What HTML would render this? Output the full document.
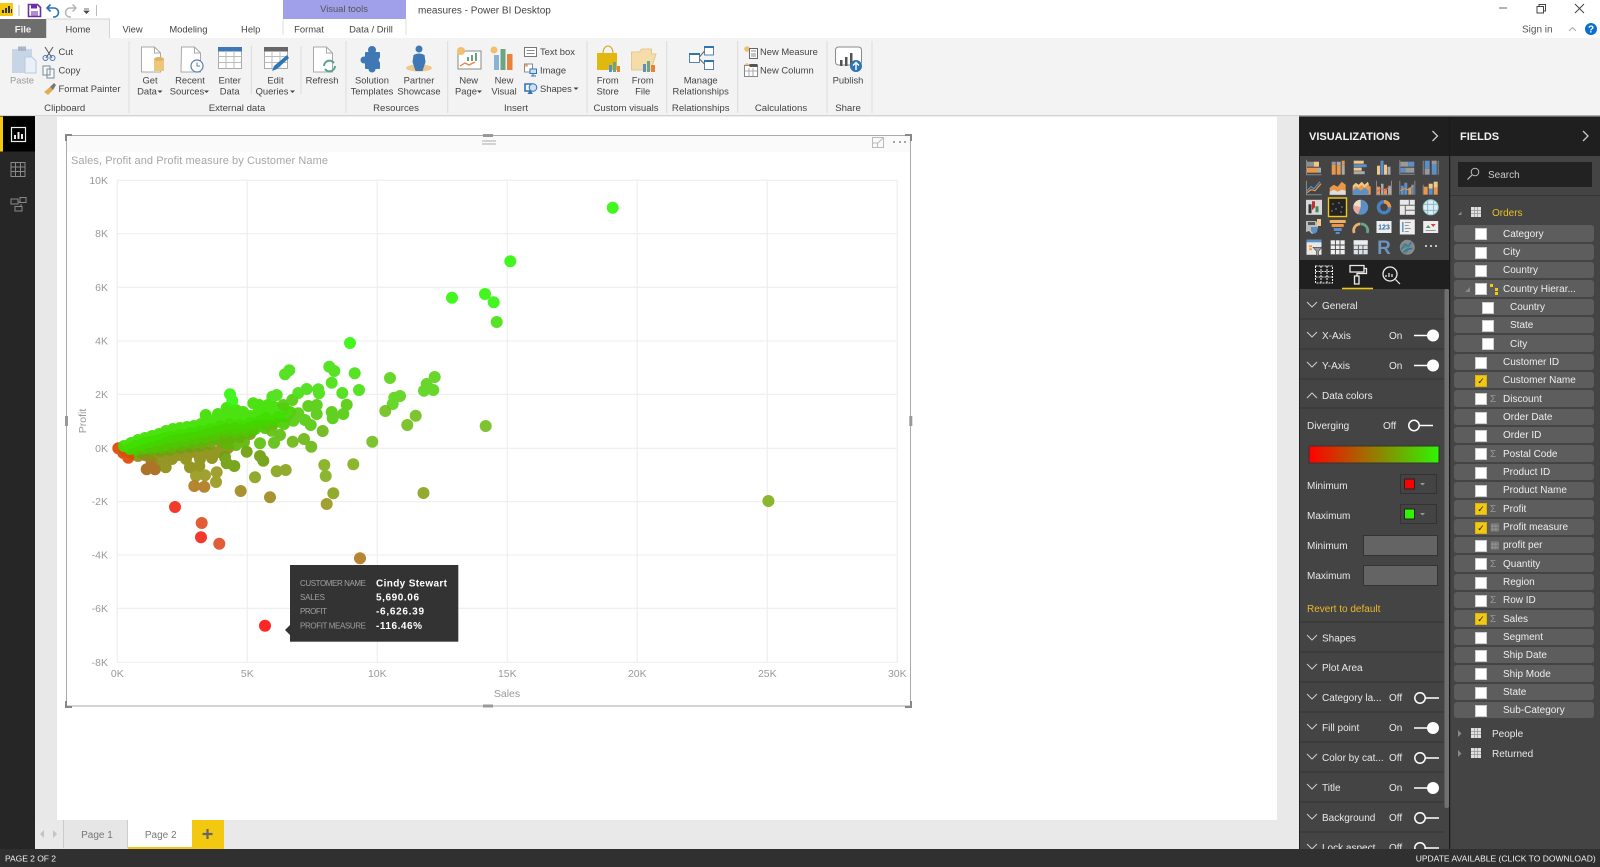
<!DOCTYPE html>
<html lang="en"><head><meta charset="utf-8"><title>measures - Power BI Desktop</title>
<style>
html,body{margin:0;padding:0;width:1600px;height:867px;overflow:hidden;background:#fff}
svg{position:absolute;left:0;top:0;font-family:"Liberation Sans",sans-serif;filter:blur(.35px)}
text{font-size:9.4px;fill:#444}
.c{text-anchor:middle}
.g{fill:#666}
.w{fill:#e8e8e8;font-size:10px}
.a{fill:#999;font-size:10.5px}
.dot{fill:none;stroke-linecap:round;stroke-width:12;opacity:.93}
.sep{stroke:#dcdcdc;stroke-width:1}
.ln{stroke:#333;stroke-width:1}
.ch{fill:none;stroke:#c8c8c8;stroke-width:1.1}
.tg{stroke:#fff;stroke-width:1.5;fill:none}
#f{position:absolute;left:1454px;top:225.3px;width:140px;font:10px "Liberation Sans",sans-serif;color:#eee;filter:blur(.35px)}
#f div{position:relative;height:16.4px;margin-bottom:1.95px;background:#5d5d5d;border-radius:3px;line-height:16px;box-sizing:border-box}
#f i{position:absolute;left:22px;top:4px;width:10px;height:10px;background:#fff;box-shadow:0 0 0 1px #ccc;font:bold 9px/10px "Liberation Sans","DejaVu Sans",sans-serif;color:#222;text-align:center}
#f i.y{background:#f2c811;box-shadow:0 0 0 1px #d8b20d}
#f span{position:absolute;left:49px;top:1.5px;white-space:nowrap}
#f b{position:absolute;left:36px;top:1.5px;font-weight:normal;color:#999;font-size:10px}
#f .s i{left:29px}#f .s span{left:56px}
</style></head><body>
<svg width="1600" height="867" viewBox="0 0 1600 867" xmlns="http://www.w3.org/2000/svg">
<!-- base areas -->
<rect width="1600" height="867" fill="#fff"/>
<rect x="0" y="38" width="1600" height="77" fill="#f3f3f3"/>
<rect x="0" y="115" width="1600" height="1.4" fill="#d4d4d4"/>
<rect x="0" y="116" width="35" height="733" fill="#262626"/>
<rect x="35" y="116" width="22" height="704" fill="#e8e8e8"/>
<rect x="1277" y="116" width="22" height="704" fill="#e9e9e9"/>
<rect x="35" y="820" width="1264" height="29" fill="#e9e9e9"/>
<!-- title bar -->
<rect x="0" y="3" width="13" height="13" fill="#f2c811"/>
<path d="M2 13v-3h2v3zM5 13V8h2v5zM8 13V6h2v7zM11 13V9h1v4z" fill="#333"/>
<path d="M19 5v11M96.500 5v11" stroke="#bbb"/>
<path d="M28.500 4.500h9l3 3v9h-12z" fill="none" stroke="#6f2da8" stroke-width="1.6"/><rect x="31" y="5" width="6" height="3.500" fill="#6f2da8"/><rect x="31" y="11" width="7" height="5" fill="#6f2da8" opacity=".55"/>
<path d="M47 8h7a4.500 4.500 0 0 1 0 9h-1M50.500 4.500 47 8l3.500 3.500" fill="none" stroke="#2a6ebb" stroke-width="1.6"/>
<path d="M76 8h-6a4.500 4.500 0 0 0 0 9h1M72.500 4.500 76 8l-3.500 3.500" fill="none" stroke="#b5b5b5" stroke-width="1.5"/>
<path d="M84 9h5M84 11l2.500 2.500 2.500-2.500z" fill="#444" stroke="#444" stroke-width=".7"/>
<rect x="283" y="0" width="123" height="19" fill="#a0a0ea"/>
<path d="M283 19v16M406 19v16" stroke="#ddd"/>
<text x="344" y="12" class="c" style="font-size:9.400px;fill:#555">Visual tools</text>
<text x="418" y="13.500" style="font-size:10px;fill:#444">measures - Power BI Desktop</text>
<path d="M1499 8h8" stroke="#666" stroke-width="1"/>
<path d="M1537 6.500h6.500v6.500h-6.500zM1539 6.500v-2h6.500v6.500h-2" fill="none" stroke="#444"/>
<path d="M1575 4l9 9M1584 4l-9 9" stroke="#444" stroke-width="1"/>
<text x="1522" y="32.500" style="font-size:10px;fill:#555">Sign in</text>
<path d="M1569 31l3.500-3.500 3.500 3.500" fill="none" stroke="#aaa"/>
<circle cx="1591" cy="29" r="6" fill="#0a6ed1"/><text x="1591" y="32.500" class="c" style="font-size:10px;font-weight:bold;fill:#fff">?</text>
<!-- tabs -->
<rect x="0" y="19" width="46.500" height="19" fill="#6d6d6d"/><text x="23" y="32.500" class="c" style="font-size:9.600px;font-weight:bold;fill:#f0f0f0">File</text>
<path d="M46.500 38V19h63v19" fill="#f3f3f3" stroke="#d4d4d4"/><rect x="47" y="36" width="62" height="3" fill="#f3f3f3"/>
<text x="78" y="32.500" class="c">Home</text><text x="132.600" y="32.500" class="c">View</text><text x="188.400" y="32.500" class="c">Modeling</text><text x="250.700" y="32.500" class="c">Help</text><text x="309" y="32.500" class="c">Format</text><text x="371" y="32.500" class="c">Data / Drill</text>
<!-- ribbon separators -->
<g class="sep"><path d="M129 41v72M346 41v72M447.700 41v72M587 41v72M666.700 41v72M737.700 41v72M827 41v72M872 41v72M251.400 46v48M301 46v48"/></g>
<!-- clipboard -->
<rect x="12" y="49" width="20" height="24" fill="#c8d5e6"/><rect x="18" y="46.500" width="8" height="4.500" fill="#a9b6c6"/><path d="M25 57h7l4 4v12H25z" fill="#eaf0f8" stroke="#b9c9dd"/>
<text x="22" y="83.500" class="c" style="fill:#999">Paste</text>
<path d="M45 47l7 11M53 47l-7 11" stroke="#555" stroke-width="1"/><circle cx="45.500" cy="58" r="2.500" fill="none" stroke="#3f78b4"/><circle cx="52.500" cy="58" r="2.500" fill="none" stroke="#3f78b4"/>
<text x="58.500" y="55">Cut</text>
<path d="M43 66h7v9h-7zM47 69h7v9h-7z" fill="#f8f8f8" stroke="#7a8a9c"/><text x="58.500" y="73.500">Copy</text>
<path d="M44 92l6-5 3 3-5 5z" fill="#e0b050"/><path d="M50 87l4-4 2 2-3 5z" fill="#777"/><text x="58.500" y="92">Format Painter</text>
<text x="64.700" y="111" class="c" style="font-size:9.600px">Clipboard</text>
<!-- external data -->
<path d="M141.500 47h13l6 6v19h-19z" fill="#fff" stroke="#a8a8a8"/><path d="M154.500 47v6h6" fill="none" stroke="#a8a8a8"/><rect x="154" y="59" width="10" height="12" fill="#ecc779"/><ellipse cx="159" cy="59" rx="5" ry="2" fill="#dfb45e"/>
<text x="150" y="83.500" class="c">Get</text><text x="147" y="94.500" class="c">Data</text><path d="M157.500 90.500h5l-2.500 2.500z" fill="#444"/>
<path d="M181.500 47h13l6 6v19h-19.500z" fill="#fff" stroke="#a8a8a8"/><path d="M194.500 47v6h6" fill="none" stroke="#a8a8a8"/><circle cx="197" cy="66" r="6" fill="#fff" stroke="#5a80aa" stroke-width="1.200"/><path d="M197 62.500v3.500h3" fill="none" stroke="#5a80aa"/>
<text x="190" y="83.500" class="c">Recent</text><text x="187" y="94.500" class="c">Sources</text><path d="M204 90.500h5l-2.500 2.500z" fill="#444"/>
<rect x="218.500" y="47.500" width="23" height="21" fill="#fff" stroke="#aaa"/><rect x="218" y="47" width="24" height="4.500" fill="#3f78b4"/><path d="M218.500 56.500h23M218.500 62.500h23M226 51v18M234 51v18" stroke="#bbb"/>
<text x="229.700" y="83.500" class="c">Enter</text><text x="229.700" y="94.500" class="c">Data</text>
<rect x="264.500" y="47.500" width="23" height="21" fill="#fff" stroke="#aaa"/><rect x="264" y="47" width="24" height="4.500" fill="#666"/><path d="M264.500 56.500h23M264.500 62.500h23M272 51v18M280 51v18" stroke="#bbb"/><path d="M272 71l2-5 13-11 2 3-12 11z" fill="#2e75b6"/>
<text x="275.500" y="83.500" class="c">Edit</text><text x="272" y="94.500" class="c">Queries</text><path d="M290 90.500h5l-2.500 2.500z" fill="#444"/>
<path d="M313.500 47h13l6 6v19h-19z" fill="#fff" stroke="#a8a8a8"/><path d="M326.500 47v6h6" fill="none" stroke="#a8a8a8"/><path d="M324 66a5.500 5.500 0 0 1 10-3M335 66a5.500 5.500 0 0 1-10 3" fill="none" stroke="#57a486" stroke-width="2"/>
<text x="322" y="83.500" class="c">Refresh</text>
<text x="237" y="111" class="c" style="font-size:9.600px">External data</text>
<!-- resources -->
<rect x="365" y="52" width="15" height="17" rx="1" fill="#3f78b4"/><circle cx="372" cy="50" r="4" fill="#3f78b4"/><circle cx="372" cy="69" r="3.500" fill="#3f78b4"/><circle cx="364" cy="60" r="3.500" fill="#3f78b4"/><circle cx="382" cy="60" r="3.200" fill="#f3f3f3"/>
<text x="372" y="83.500" class="c">Solution</text><text x="372" y="94.500" class="c">Templates</text>
<ellipse cx="419" cy="68" rx="13" ry="3.500" fill="#efc98d"/><circle cx="419" cy="49" r="3.500" fill="#3f78b4"/><path d="M413.500 55q5.500-3 11 0l1 7-3 9h-7l-3-9z" fill="#3f78b4"/>
<text x="419" y="83.500" class="c">Partner</text><text x="419" y="94.500" class="c">Showcase</text>
<text x="396" y="111" class="c" style="font-size:9.600px">Resources</text>
<!-- insert -->
<rect x="458" y="51" width="23" height="18" fill="#fff" stroke="#888"/><circle cx="461" cy="51" r="4" fill="#f0c070"/><path d="M467 57h2v4h-2zM471 55h2v6h-2zM475 53h2v8h-2z" fill="#6aa082"/><path d="M460 66l5-3 4 2 6-3" fill="none" stroke="#e8813a" stroke-width="1.300"/>
<text x="468.700" y="83.500" class="c">New</text><text x="466" y="94.500" class="c">Page</text><path d="M477 90.500h5l-2.500 2.500z" fill="#444"/>
<circle cx="494" cy="50" r="3.500" fill="#f0c070"/><rect x="494" y="55" width="5" height="15" fill="#8ab2d2"/><rect x="500.500" y="49" width="5" height="21" fill="#6ba588"/><rect x="507" y="54" width="5.500" height="16" fill="#e8813a"/>
<text x="504" y="83.500" class="c">New</text><text x="504" y="94.500" class="c">Visual</text>
<rect x="524.500" y="47.500" width="12" height="9" fill="#fff" stroke="#777"/><path d="M526.500 50.500h8M526.500 53.500h8" stroke="#888"/><text x="540" y="55">Text box</text>
<rect x="524.500" y="64" width="8" height="8" fill="#fff" stroke="#888"/><circle cx="526.500" cy="65.500" r="1.300" fill="#e8a04c"/><path d="M530 69h6.500v4.500H530zM533 73.500v2M531 76h5" fill="#cfe0f3" stroke="#2e75b6"/><text x="540" y="73.500">Image</text>
<path d="M525 84h6.500v7H525z" fill="none" stroke="#2e75b6" stroke-width="1.600"/><circle cx="533" cy="87.500" r="3.800" fill="#cfe0f3" stroke="#2e75b6"/><path d="M527.500 94l2.500-4 3 4z" fill="#2e75b6"/><text x="540" y="92">Shapes</text><path d="M573.500 87.500h5l-2.500 2.500z" fill="#444"/>
<text x="516" y="111" class="c" style="font-size:9.600px">Insert</text>
<!-- custom visuals -->
<path d="M597 53h20v17h-20z" fill="#e1b80f"/><path d="M603 53a5 7 0 0 1 10 0" fill="none" stroke="#c9a40c"/><path d="M609 65h3v7h-3z" fill="#5b8fc7"/><path d="M613 62h3v10h-3z" fill="#6ba588"/><path d="M617 66h3v6h-3z" fill="#e8813a"/>
<text x="607.700" y="83.500" class="c">From</text><text x="607.700" y="94.500" class="c">Store</text>
<path d="M631.500 52h8l2-3h10v5h4.500l-5 16h-19.500z" fill="#f5dca8" stroke="#e3c88f"/><path d="M643 64h3v8h-3z" fill="#5b8fc7"/><path d="M647 61h3v11h-3z" fill="#6ba588"/><path d="M651 65h4v7h-4z" fill="#e8813a"/>
<text x="642.700" y="83.500" class="c">From</text><text x="642.700" y="94.500" class="c">File</text>
<text x="626" y="111" class="c" style="font-size:9.600px">Custom visuals</text>
<!-- relationships -->
<g fill="#fff" stroke="#5a82ad"><rect x="689.500" y="53.500" width="10" height="9"/><rect x="704.500" y="46.500" width="9" height="8.500"/><rect x="704.500" y="60.500" width="9" height="9"/></g>
<path d="M689 53h11v2h-11zM704 46h10v2h-10zM704 60h10v2h-10z" fill="#2e75b6"/><path d="M699.500 57l5-6M699.500 59l5 5" stroke="#666"/>
<text x="700.700" y="83.500" class="c">Manage</text><text x="700.700" y="94.500" class="c">Relationships</text><text x="700.700" y="111" class="c" style="font-size:9.600px">Relationships</text>
<!-- calculations -->
<circle cx="747" cy="49" r="2.800" fill="#f0c070"/><rect x="749.500" y="48.500" width="8" height="10" fill="#fff" stroke="#666"/><path d="M751 51h5M751 54h5M751 56h5" stroke="#888"/><text x="760" y="55">New Measure</text>
<circle cx="747" cy="66" r="2.800" fill="#f0c070"/><rect x="744.500" y="65.500" width="13" height="11" fill="#fff" stroke="#888"/><rect x="749.500" y="64" width="8" height="3" fill="#555"/><path d="M749 68v8M753 68v8M745 71h12" stroke="#aaa"/><text x="760" y="73.500">New Column</text>
<text x="781" y="111" class="c" style="font-size:9.600px">Calculations</text>
<!-- publish -->
<rect x="835.500" y="47" width="26" height="18" rx="3" fill="#fff" stroke="#888"/><path d="M840 60h2.500v6H840zM845 57h2.500v9H845zM850 53h2.500v13H850z" fill="#555"/><circle cx="856" cy="66" r="6" fill="#2e75b6"/><path d="M856 70v-7M853 65.500l3-3 3 3" fill="none" stroke="#fff" stroke-width="1.400"/>
<text x="848" y="83.500" class="c">Publish</text><text x="848" y="111" class="c" style="font-size:9.600px">Share</text>
<!-- left rail -->
<rect x="3" y="116.500" width="32" height="35" fill="#000"/><rect x="0" y="116.500" width="3" height="35" fill="#f2c811"/>
<rect x="11.500" y="127.500" width="14" height="14" fill="none" stroke="#eee" stroke-width="1.200"/><path d="M14 139v-4h2v4zM17.500 139v-7h2v7zM21 139v-5h2v5z" fill="#eee"/>
<path d="M11 162.500h14v14h-14zM11 167h14M11 171.500h14M15.500 162.500v14M20.500 162.500v14" fill="none" stroke="#8a8a8a"/>
<path d="M11 199h7v5h-7zM20 197.500h6v5h-6zM15 206.500h7v4.500h-7zM18 202h2M21 204v2.500" fill="none" stroke="#8a8a8a"/>
<!-- visual frame -->
<rect x="66.500" y="135.500" width="844" height="570.500" fill="#fff" stroke="#aaa"/>
<rect x="67" y="136" width="843" height="16" fill="#fafafa"/>
<path d="M65 134h7v2h-5v5h-2zM912 134h-7v2h5v5h2zM65 708h7v-2h-5v-5h-2zM912 708h-7v-2h5v-5h2z" fill="#888"/>
<rect x="483" y="134" width="10" height="3" fill="#999"/><rect x="483" y="704.500" width="10" height="3" fill="#999"/><rect x="65" y="416" width="3" height="10" fill="#999"/><rect x="909.300" y="416" width="3" height="10" fill="#999"/>
<path d="M482 141h14M482 144h14" stroke="#aaa"/>
<path d="M872.500 137.500h11v10h-11zM872.500 143h5v4.500M878 143l5-5M880 137.500h3.500v3.500" fill="none" stroke="#bbb"/>
<path d="M893 142h2M899 142h2M904 142h2" stroke="#888" stroke-width="1.500"/>
<text x="71" y="164" textLength="257" style="font-size:11px;fill:#a6a6a6">Sales, Profit and Profit measure by Customer Name</text>
<!-- grid -->
<g stroke="#eee" stroke-width="1.100" fill="none"><path d="M117.300 180.300v482M247.300 180.300v482M377.300 180.300v482M507.300 180.300v482M637.300 180.300v482M767.300 180.300v482M897.300 180.300v482"/>
<path d="M117.300 180.300h780M117.300 233.700h780M117.300 287.300h780M117.300 341h780M117.300 394.300h780M117.300 448.300h780M117.300 501.700h780M117.300 555h780M117.300 608.300h780M117.300 662.300h780"/></g>
<g style="text-anchor:end"><text x="108" y="183.800" class="a">10K</text><text x="108" y="237.200" class="a">8K</text><text x="108" y="290.800" class="a">6K</text><text x="108" y="344.500" class="a">4K</text><text x="108" y="397.800" class="a">2K</text><text x="108" y="451.800" class="a">0K</text><text x="108" y="505.200" class="a">-2K</text><text x="108" y="558.500" class="a">-4K</text><text x="108" y="611.800" class="a">-6K</text><text x="108" y="665.800" class="a">-8K</text></g>
<g><text x="117.300" y="677" class="c a">0K</text><text x="247.300" y="677" class="c a">5K</text><text x="377.300" y="677" class="c a">10K</text><text x="507.300" y="677" class="c a">15K</text><text x="637.300" y="677" class="c a">20K</text><text x="767.300" y="677" class="c a">25K</text><text x="897.300" y="677" class="c a">30K</text></g>
<text x="507" y="697" class="c a">Sales</text><text transform="translate(86,421) rotate(-90)" class="c a">Profit</text>
<!-- dots : cloud from bottom to top -->
<path class="dot" stroke="#a8681a" d="M146.700 469.300h0M155 469.300h0M145 455h0M151.700 461.700h0"/>
<path class="dot" stroke="#8d8f14" d="M165.700 467.300h0M190 467.300h0M199.300 466h0M138 456h0M148 456h0M158 456h0M168 456h0M178 455h0M188 454h0M198 454h0M208 453h0M218 452h0M228 448h0M160 460h0M172 459h0M186 459h0M200 459h0M212 458h0"/>
<path class="dot" stroke="#6f9f0e" d="M225 457.300h0M226.700 463.300h0M234.300 466h0M246.700 451.700h0M260 456h0M263.300 460.700h0M140 452h0M150 451h0M160 451h0M170 450h0M180 448h0M190 447h0M200 446h0M210 444h0M220 441h0M230 439h0M240 437h0M250 434h0"/>
<path class="dot" stroke="#5fb508" d="M132 454h0M142 449h0M152 449h0M162 448h0M172 447h0M182 445h0M192 443h0M202 442h0M212 439h0M222 437h0M232 436h0M242 434h0M252 431h0M244 442h0M236 445h0M226 444h0"/>
<path class="dot" stroke="#4fc604" d="M125 451h0M135 450h0M145 448h0M155 447h0M165 445h0M175 443h0M185 441h0M195 439h0M205 437h0M215 435h0M225 432h0M235 432h0M245 431h0M255 429h0M265 428h0M272 424h0"/>
<path class="dot" stroke="#e04806" d="M128.300 457.700h0M123.300 453h0M118.300 448.300h0"/>
<path class="dot" stroke="#4ccc02" d="M135 446h0M145 443h0M155 441h0M165 438h0M175 437h0M185 436h0M195 434h0M205 432h0M215 430h0M225 428h0M235 428h0M245 427h0M255 425h0M265 424h0M276 422h0M284 424h0"/>
<path class="dot" stroke="#44d400" d="M130 449h0M140 445h0M150 442h0M160 440h0M170 437h0M180 435h0M190 433h0M200 431h0M210 429h0M220 426h0M230 424h0M240 425h0M250 423h0M260 421h0M270 421h0M278 417h0M286 417h0M266 418h0M290 412h0"/>
<path class="dot" stroke="#3ee000" d="M124 446h0M131 443h0M138 440h0M145 438h0M152 436h0M159 434h0M166 431h0M173 429h0M180 428h0M187 427h0M194 426h0M201 424h0M208 422h0M215 420h0M222 418h0M229 416h0M236 416h0M243 418h0M250 416h0M257 414h0M264 414h0M271 414h0M278 410h0M284 408h0M205.700 415h0M226.700 408h0M253.300 403.300h0M259.300 405h0M262 408h0M268 405h0M274 407h0M280 413h0M236 410h0M243 412h0M218 414h0"/>
<path class="dot" stroke="#5fbf10" d="M274 442.700h0M260 443.300h0M280 435h0M271.700 430.700h0"/>
<path class="dot" stroke="#6cb818" d="M292.700 441.700h0M304 439h0M311.300 446.700h0M322.700 431h0"/>
<path class="dot" stroke="#55cc10" d="M292.300 400h0M283.300 405h0M308.300 406h0M316.700 405h0M298.300 413.300h0M305 420h0M310.700 425h0M293.300 420.700h0M316.700 414h0M346.700 404.700h0M343.300 414h0M331.700 412h0M332.700 418.300h0"/>
<path class="dot" stroke="#4be014" d="M496.700 322h0M329.300 366.700h0M334.300 371h0M354.700 373.300h0M289.300 370.300h0M285 374.300h0M331.700 382.700h0M359 390h0M306.700 389h0M298.300 393h0M318.300 389.300h0M319 393.300h0M272.300 396.700h0M276.700 395h0M342.300 393h0"/>
<path class="dot" stroke="#5dd41c" d="M390 378h0M434.700 377h0M426.700 384h0M424 390.700h0M433.300 390h0M400 396h0M394.300 397.700h0M392.700 404h0"/>
<path class="dot" stroke="#73bf20" d="M385.300 411h0M415.700 415.700h0M407.300 425h0M485.700 426h0M372.300 441.700h0"/>
<path class="dot" stroke="#82b01e" d="M324.300 465h0M325.700 476h0M353.300 464.300h0M768.400 501h0"/>
<path class="dot" stroke="#8aa51f" d="M276.700 471.300h0M285.700 470h0M255 477.300h0M333.300 493.300h0M423.500 493h0"/>
<path class="dot" stroke="#9a9a22" d="M326.700 504h0M216.700 472.300h0M216 482h0M205 475.300h0M196 475.700h0"/>
<path class="dot" stroke="#a08c20" d="M270 497.300h0M240.700 491h0"/>
<path class="dot" stroke="#b07c22" d="M194.300 486h0M204.300 486.700h0M360 558.300h0"/>
<path class="dot" stroke="#e05026" d="M201.700 523h0M219.300 543.700h0"/>
<path class="dot" stroke="#f22a1c" d="M175 507h0M201 537.300h0"/>
<path class="dot" stroke="#ff1616" d="M265 625.700h0"/>
<path class="dot" stroke="#35f50f" d="M612.700 207.700h0M510.300 261.300h0M485 294h0M493.700 302.300h0M452 297.700h0M350 343h0M230 394.300h0M232.300 400.700h0"/>
<!-- tooltip -->
<rect x="290" y="565" width="168.300" height="76.700" fill="#333"/><path d="M290 625l-5 5 5 5z" fill="#333"/>
<g><text x="300" y="586" textLength="66" style="font-size:8px;fill:#a0a0a0">CUSTOMER NAME</text><text x="300" y="600" textLength="25" style="font-size:8px;fill:#a0a0a0">SALES</text><text x="300" y="614" textLength="27" style="font-size:8px;fill:#a0a0a0">PROFIT</text><text x="300" y="628.500" textLength="66" style="font-size:8px;fill:#a0a0a0">PROFIT MEASURE</text></g>
<g><text x="376" y="586.500" textLength="71" style="font-size:10px;font-weight:bold;fill:#fff">Cindy Stewart</text><text x="376" y="600.500" textLength="43" style="font-size:10px;font-weight:bold;fill:#fff">5,690.06</text><text x="376" y="614.500" textLength="48" style="font-size:10px;font-weight:bold;fill:#fff">-6,626.39</text><text x="376" y="629" textLength="46" style="font-size:10px;font-weight:bold;fill:#fff">-116.46%</text></g>
<!-- page tabs -->
<rect x="63" y="820" width="65" height="29" fill="#e6e6e6"/><path d="M63.500 820v28M127.500 820v28" stroke="#ccc"/>
<rect x="128" y="820" width="64" height="27" fill="#fff"/><rect x="128" y="847" width="64" height="2" fill="#f2c811"/>
<rect x="192" y="820" width="32" height="29" fill="#f2c811"/>
<path d="M207.500 829v10M202.500 834h10" stroke="#666" stroke-width="2.200"/>
<path d="M44 830l-4 4 4 4zM53 830l4 4-4 4z" fill="#c4c4c4"/>
<text x="97" y="838" class="c" style="font-size:10px;fill:#777">Page 1</text><text x="160.700" y="838" class="c" style="font-size:10px;fill:#777">Page 2</text>
<!-- panes -->
<rect x="1299" y="116" width="301" height="733" fill="#444"/>
<rect x="1299" y="116" width="301" height="40" fill="#1f1f1f"/>
<rect x="1299" y="260" width="150" height="29" fill="#1f1f1f"/>
<rect x="1299" y="116" width="1" height="733" fill="#222"/>
<rect x="1449" y="116" width="1.200" height="733" fill="#1a1a1a"/>
<rect x="1299" y="115.500" width="301" height="1.200" fill="#888"/>
<text x="1309" y="140" style="font-size:11px;font-weight:bold;fill:#f2f2f2">VISUALIZATIONS</text>
<text x="1460" y="140" style="font-size:11px;font-weight:bold;fill:#f2f2f2">FIELDS</text>
<path d="M1432.500 131l5 5-5 5M1583 131l5 5-5 5" fill="none" stroke="#c8c8c8" stroke-width="1.300"/>
<rect x="1458" y="162" width="134" height="25" fill="#222"/>
<circle cx="1475" cy="172" r="3.800" fill="none" stroke="#bbb"/><path d="M1472 175l-4.500 4.500" stroke="#bbb" stroke-width="1.200"/>
<text x="1488" y="178" style="font-size:10px;fill:#ccc">Search</text>
<rect x="1450" y="195" width="150" height="1" fill="#353535"/>
<path d="M1458 215l3.500-3.500v3.500z" fill="#888"/>
<rect x="1471" y="207" width="10" height="10" fill="#e0e0e0"/><path d="M1474.300 207v10M1477.600 207v10M1471 210.300h10M1471 213.600h10" stroke="#888" stroke-width=".6"/>
<text x="1492" y="216" style="font-size:10px;fill:#e9c022">Orders</text>
<path d="M1458 730l3.500 3.500-3.500 3.500zM1458 750l3.500 3.500-3.500 3.500z" fill="#888"/>
<rect x="1471" y="728" width="10" height="10" fill="#e0e0e0"/><path d="M1474.300 728v10M1477.600 728v10M1471 731.300h10M1471 734.600h10" stroke="#888" stroke-width=".6"/>
<rect x="1471" y="748" width="10" height="10" fill="#e0e0e0"/><path d="M1474.300 748v10M1477.600 748v10M1471 751.300h10M1471 754.600h10" stroke="#888" stroke-width=".6"/>
<text x="1492" y="737" class="w">People</text><text x="1492" y="757" class="w">Returned</text>
<!-- viz icons -->
<g>
<g transform="translate(1314,167.700)"><path d="M-7 -6h7v5h-7z" fill="#8f8f8f"/><path d="M0 -6h5v5h-5z" fill="#f0c88a"/><path d="M-7 0h10v5h-10z" fill="#e9974a"/><path d="M3 0h4v5h-4z" fill="#aaa"/><path d="M-7.500 -8v15h15" fill="none" stroke="#888"/></g>
<g transform="translate(1337.700,167.700)"><path d="M-6 -3h4v10h-4z" fill="#e9974a"/><path d="M-1 -2h4v9h-4z" fill="#e9974a"/><path d="M-1 -6h4v4h-4zM4 -3h3v10h-3z" fill="#aaa"/><path d="M-6 -6h4v3h-4z" fill="#999"/><path d="M4 -7h3v4h-3z" fill="#e9974a"/></g>
<g transform="translate(1360.700,167.700)"><path d="M-7 -7h10v3h-10z" fill="#f0c88a"/><path d="M-7 -3.500h13v3h-13z" fill="#5b8fc7"/><path d="M-7 0h8v3h-8z" fill="#f0c88a"/><path d="M-7 3.500h11v3h-11z" fill="#aaa"/></g>
<g transform="translate(1384,167.700)"><path d="M-7 -2h3v9h-3z" fill="#f0c88a"/><path d="M-3.500 -7h3v14h-3z" fill="#5b8fc7"/><path d="M0 -3h3v10h-3z" fill="#f0c88a"/><path d="M3.500 -1h3v8h-3z" fill="#aaa"/></g>
<g transform="translate(1407.300,167.700)"><path d="M-7 -6h8v5h-8z" fill="#999"/><path d="M1 -6h6v5h-6z" fill="#5b8fc7"/><path d="M-7 0h5v5h-5z" fill="#5b8fc7"/><path d="M-2 0h9v5h-9z" fill="#999"/><path d="M-7.500 -7.500v14h15" fill="none" stroke="#888"/></g>
<g transform="translate(1430.700,167.700)"><path d="M-6 -7h5v8h-5z" fill="#5b8fc7"/><path d="M-6 1h5v6h-5z" fill="#999"/><path d="M1 -7h5v4h-5z" fill="#999"/><path d="M1 -3h5v10h-5z" fill="#5b8fc7"/><path d="M-7.500 -7v14M7.500 -7v14" stroke="#888"/></g>
<g transform="translate(1314,187.700)"><path d="M-7.500 -7v14h15" fill="none" stroke="#888"/><path d="M-7 3l4-4 3 2 6-7" fill="none" stroke="#5b8fc7" stroke-width="1.200"/><path d="M-7 5l4-3 4 1 6-7" fill="none" stroke="#e9974a" stroke-width="1.200"/></g>
<g transform="translate(1337.700,187.700)"><path d="M-8 7v-7l4-3 4 2 4-5 4 3v10z" fill="#e9974a"/><path d="M-8 7v-3l4-2 4 2 4-2 4 1v4z" fill="#ddd"/></g>
<g transform="translate(1360.700,187.700)"><path d="M-8 7V-2l3-3 3 2 3-3 3 3 3-3 1 2v11z" fill="#f0c88a"/><path d="M-8 1l3-3 3 2 3-3 3 3 3-3 3 2v8h-16z" fill="#e9974a"/><path d="M-8 3l4-3 4 3 4-3 4 3v4h-16z" fill="#5b8fc7"/></g>
<g transform="translate(1384,187.700)"><path d="M-7 -1h3v8h-3zM0 1h3v6h-3z" fill="#e9974a"/><path d="M-3 -4h2.500v11h-2.500zM4 -2h3v9h-3z" fill="#aaa"/><path d="M-7.500 -7v14h15M7.500 -7v14" fill="none" stroke="#888"/><path d="M-7 4l4-3 4 2 5-5" fill="none" stroke="#e06060"/></g>
<g transform="translate(1407.300,187.700)"><path d="M-6.500 -2h3v9h-3zM-3 -5h3v12h-3z" fill="#5b8fc7"/><path d="M1 0h3v7h-3z" fill="#e9974a"/><path d="M4 -3h2.500v10h-2.500z" fill="#5b8fc7"/><path d="M-7.500 -7v14M7.500 -7v14" stroke="#888"/><path d="M-7 3l4-2 4 1 5-4" fill="none" stroke="#e9974a"/></g>
<g transform="translate(1430.700,187.700)"><path d="M-7 -1h4v8h-4z" fill="#e9974a"/><path d="M-2 -4h4v5h-4z" fill="#f0c88a"/><path d="M-2 1h4v6h-4z" fill="#5b8fc7"/><path d="M3 -6h4v6h-4z" fill="#f0c88a"/><path d="M3 0h4v7h-4z" fill="#e9974a"/><path d="M-7.500 -3v10" stroke="#888"/></g>
<g transform="translate(1314,207.300)"><rect x="-8" y="-7.500" width="16" height="15" fill="#d8d8d8"/><path d="M-5.500 6v-9h3v9z" fill="#333"/><path d="M-2 3v-9h3v6z" fill="#c03030"/><path d="M1.500 5v-6h3v6z" fill="#3a8a5a"/></g>
<rect x="1328.500" y="198" width="18" height="18.500" fill="#222" stroke="#f2c811" stroke-width="1.400"/><g fill="#777"><circle cx="1333" cy="204" r=".9"/><circle cx="1339" cy="203" r=".9"/><circle cx="1342" cy="207" r=".9"/><circle cx="1336" cy="209" r=".9"/><circle cx="1332" cy="211" r=".9"/><circle cx="1341" cy="212" r=".9"/></g>
<g transform="translate(1360.700,207.300)"><circle r="7.500" fill="#5b8fc7"/><path d="M0 0V-7.500A7.500 7.500 0 0 0 -7.300 -1.700z" fill="#f0dcc0"/><path d="M0 0L-7.300 -1.700A7.500 7.500 0 0 0 -2.500 7z" fill="#e9a89a"/></g>
<g transform="translate(1384,207.300)"><circle r="5.500" fill="none" stroke="#4a80bb" stroke-width="3.500"/><path d="M0 -5.500A5.500 5.500 0 0 1 5.500 0" fill="none" stroke="#e9974a" stroke-width="3.500"/></g>
<g transform="translate(1407.300,207.300)"><rect x="-7.500" y="-7.500" width="15" height="15" fill="#e8e8e8"/><path d="M-7.500 -2h15M2 -7.500v5.500M-2 -2v9.500M-2 3h9.500" stroke="#666"/></g>
<g transform="translate(1430.700,207.300)"><circle r="7.500" fill="#dfeef0"/><path d="M-7 -3h14M-7 3h14M-3 -7v14M3 -7v14" stroke="#7ab0c8" stroke-width=".8"/><circle r="7.500" fill="none" stroke="#9cc"/></g>
<g transform="translate(1314,227)"><path d="M-8 -6h10l2 3v4l-3 4-3 2-3-3-3 1z" fill="#bbb"/><path d="M-3 0h7l-1 5-3 2-3-3z" fill="#5b8fc7"/><path d="M3 -8h4v7h-4z" fill="#f0c88a"/><path d="M-6 -5h7v3h-7z" fill="#555"/></g>
<g transform="translate(1337.700,227)"><path d="M-8 -7h16v3h-16z" fill="#f0b060"/><path d="M-6 -3h12v3h-12z" fill="#e9974a"/><path d="M-4 1h8v3h-8z" fill="#5b8fc7"/><path d="M-2 5h4v2h-4z" fill="#5b8fc7"/></g>
<g transform="translate(1360.700,227)"><path d="M-6.500 6a6.500 6.500 0 0 1 6-9" fill="none" stroke="#e9b070" stroke-width="2.800"/><path d="M0 -3a6.500 6.500 0 0 1 6.500 9" fill="none" stroke="#6ba588" stroke-width="2.800"/></g>
<g transform="translate(1384,227)"><rect x="-7.500" y="-6" width="15" height="12" fill="#eee"/><text x="0" y="2.500" class="c" style="font-size:7px;font-weight:bold;fill:#2e6ca8">123</text></g>
<g transform="translate(1407.300,227)"><rect x="-7.500" y="-7.500" width="15" height="15" fill="#eee"/><path d="M-4.500 -5v10" stroke="#5b8fc7" stroke-width="1.400"/><path d="M-2.500 -4.500h6M-2.500 -1.500h4M-2.500 1.500h6M-2.500 4.500h4" stroke="#999"/></g>
<g transform="translate(1430.700,227)"><rect x="-7.500" y="-6" width="15" height="12" fill="#eee"/><path d="M-5 1h5l-2.500-3z" fill="#5a9a70"/><path d="M0 -3h5l-2.500 3z" fill="#d04040"/><path d="M-5 3.500h10" stroke="#999"/></g>
<g transform="translate(1314,247.300)"><rect x="-7.500" y="-7.500" width="15" height="15" fill="#e8e8e8"/><path d="M-7.500 -7.500h15v2.500h-15z" fill="#5b8fc7"/><path d="M-5 -2h3v2h-3zM-5 1h3v2h-3z" fill="#f0a040"/><path d="M-1 0h9l-3.500 4v4l-2 1v-5z" fill="#999" stroke="#444" stroke-width=".6"/></g>
<g transform="translate(1337.700,247.300)"><rect x="-7" y="-7" width="14" height="14" fill="#eee"/><path d="M-7 -2.300h14M-7 2.300h14M-2.300 -7v14M2.300 -7v14" stroke="#444" stroke-width=".9"/></g>
<g transform="translate(1360.700,247.300)"><rect x="-7" y="-7" width="14" height="14" fill="#d8e0e8"/><path d="M-7 -2.300h14M-7 2.300h14M-2.300 -7v14M2.300 -7v14" stroke="#555" stroke-width=".9"/><rect x="-7" y="-7" width="14" height="4.500" fill="#eee"/></g>
<text x="1384" y="254" class="c" style="font-size:19px;font-weight:bold;fill:#6f93c0">R</text>
<g transform="translate(1407.300,247.300)"><circle r="7.500" fill="#8a8a8a"/><path d="M-6 2l4-5 3 2 3-4M-4 5l4-3 5-1" fill="none" stroke="#2e75b6" stroke-width="1.600"/><path d="M-5 -3l3 3 5-2M-2 6l3-3" fill="none" stroke="#3a9a60" stroke-width="1.200"/></g>
<path d="M1425 246h2M1430 246h2M1435 246h2" stroke="#eee" stroke-width="1.600"/>
</g>
<!-- format tabs -->
<path d="M1315.500 266h17v17h-17zM1315.500 271.500h17M1315.500 277h17M1321 266v17M1327 266v17" fill="none" stroke="#eee" stroke-dasharray="2 1"/>
<path d="M1350 265.500h14v6.500h-14zM1364 268.500h2.500v5h-9.500v2.500M1354.500 276h4.500v8h-4.500z" fill="none" stroke="#eee" stroke-width="1.300"/>
<circle cx="1390" cy="274" r="7" fill="none" stroke="#eee" stroke-width="1.300"/><path d="M1386 277v-2M1389 277v-4M1392 277v-3M1395.500 279.500l4.500 4.500" stroke="#eee" stroke-width="1.200"/>
<rect x="1342" y="287.700" width="31" height="1.600" fill="#f2c811"/>
<rect x="1444.500" y="289" width="4.500" height="519" rx="2" fill="#707070"/>
<!-- format sections separators -->
<g class="ln"><path d="M1300 319h144M1300 349h144M1300 379h144M1300 408h144M1300 622h144M1300 652h144M1300 682h144M1300 712h144M1300 742h144M1300 772h144M1300 802h144M1300 832h144"/></g>
<g class="ch"><path d="M1307 302l5 5 5-5M1307 332l5 5 5-5M1307 362l5 5 5-5M1307 635l5 5 5-5M1307 664l5 5 5-5M1307 694l5 5 5-5M1307 724l5 5 5-5M1307 754l5 5 5-5M1307 784l5 5 5-5M1307 814l5 5 5-5M1307 844l5 5 5-5M1307 398l5-5 5 5"/></g>
<g>
<text x="1322" y="309" class="w">General</text><text x="1322" y="339" class="w">X-Axis</text><text x="1322" y="369" class="w">Y-Axis</text><text x="1322" y="399" class="w">Data colors</text>
<text x="1307" y="429" class="w">Diverging</text><text x="1307" y="489" class="w">Minimum</text><text x="1307" y="519" class="w">Maximum</text><text x="1307" y="549" class="w">Minimum</text><text x="1307" y="579" class="w">Maximum</text>
<text x="1307" y="612" style="font-size:10px;fill:#e9b92a">Revert to default</text>
<text x="1322" y="641.500" class="w">Shapes</text><text x="1322" y="671" class="w">Plot Area</text><text x="1322" y="701" class="w">Category la...</text><text x="1322" y="731" class="w">Fill point</text><text x="1322" y="761" class="w">Color by cat...</text><text x="1322" y="791" class="w">Title</text><text x="1322" y="821" class="w">Background</text><text x="1322" y="851" class="w">Lock aspect</text>
<text x="1389" y="339" class="w">On</text><text x="1389" y="369" class="w">On</text><text x="1383" y="429" class="w">Off</text><text x="1389" y="701" class="w">Off</text><text x="1389" y="731" class="w">On</text><text x="1389" y="761" class="w">Off</text><text x="1389" y="791" class="w">On</text><text x="1389" y="821" class="w">Off</text><text x="1389" y="851" class="w">Off</text>
</g>
<g fill="#fff"><path d="M1414 335.500h16M1414 365.500h16M1414 728h16M1414 788h16" stroke="#fff" stroke-width="1.500"/><circle cx="1433" cy="335.500" r="6"/><circle cx="1433" cy="365.500" r="6"/><circle cx="1433" cy="728" r="6"/><circle cx="1433" cy="788" r="6"/></g>
<g class="tg"><circle cx="1414" cy="425.500" r="5.200"/><path d="M1419 425.500h14"/><circle cx="1420" cy="698" r="5.200"/><path d="M1425 698h14"/><circle cx="1420" cy="758" r="5.200"/><path d="M1425 758h14"/><circle cx="1420" cy="818" r="5.200"/><path d="M1425 818h14"/><circle cx="1420" cy="848" r="5.200"/><path d="M1425 848h14"/></g>
<defs><linearGradient id="gr"><stop offset="0" stop-color="#ff0000"/><stop offset="1" stop-color="#2ff500"/></linearGradient></defs>
<rect x="1309" y="446" width="130" height="17" fill="url(#gr)" stroke="#333"/>
<rect x="1400.500" y="474.500" width="36" height="19" fill="none" stroke="#333"/><rect x="1404.500" y="479" width="10" height="10" fill="#f00" stroke="#222"/><path d="M1420 483h5l-2.500 2.500z" fill="#999"/>
<rect x="1400.500" y="504.500" width="36" height="19" fill="none" stroke="#333"/><rect x="1404.500" y="509" width="10" height="10" fill="#2ff500" stroke="#222"/><path d="M1420 513h5l-2.500 2.500z" fill="#999"/>
<rect x="1363.500" y="535.500" width="74" height="20" fill="#646464" stroke="#333"/><rect x="1363.500" y="565.500" width="74" height="20" fill="#646464" stroke="#333"/>
<!-- status bar -->
<rect x="0" y="849" width="1600" height="18" fill="#303030"/>
<text x="5" y="861.500" textLength="51" style="font-size:8.500px;fill:#f0f0f0">PAGE 2 OF 2</text>
<text x="1415.700" y="861.500" textLength="180" style="font-size:8.500px;fill:#f0f0f0">UPDATE AVAILABLE (CLICK TO DOWNLOAD)</text>
</svg>
<div id="f">
<div><i></i><span>Category</span></div>
<div><i></i><span>City</span></div>
<div><i></i><span>Country</span></div>
<div><svg width="6" height="6" style="left:11px;top:6px;filter:none"><path d="M0 6l5-5v5z" fill="#888"/></svg><i></i><svg width="10" height="12" style="left:36px;top:3px;filter:none"><path d="M0 1h3v3H0zM5 5h3v3H5zM5 9h3v3H5z" fill="#f2c811"/></svg><span>Country Hierar...</span></div>
<div class="s"><i></i><span>Country</span></div>
<div class="s"><i></i><span>State</span></div>
<div class="s"><i></i><span>City</span></div>
<div><i></i><span>Customer ID</span></div>
<div><i class="y">✓</i><span>Customer Name</span></div>
<div><i></i><b>Σ</b><span>Discount</span></div>
<div><i></i><span>Order Date</span></div>
<div><i></i><span>Order ID</span></div>
<div><i></i><b>Σ</b><span>Postal Code</span></div>
<div><i></i><span>Product ID</span></div>
<div><i></i><span>Product Name</span></div>
<div><i class="y">✓</i><b>Σ</b><span>Profit</span></div>
<div><i class="y">✓</i><b>▦</b><span>Profit measure</span></div>
<div><i></i><b>▦</b><span>profit per</span></div>
<div><i></i><b>Σ</b><span>Quantity</span></div>
<div><i></i><span>Region</span></div>
<div><i></i><b>Σ</b><span>Row ID</span></div>
<div><i class="y">✓</i><b>Σ</b><span>Sales</span></div>
<div><i></i><span>Segment</span></div>
<div><i></i><span>Ship Date</span></div>
<div><i></i><span>Ship Mode</span></div>
<div><i></i><span>State</span></div>
<div><i></i><span>Sub-Category</span></div>
</div>
</body></html>
